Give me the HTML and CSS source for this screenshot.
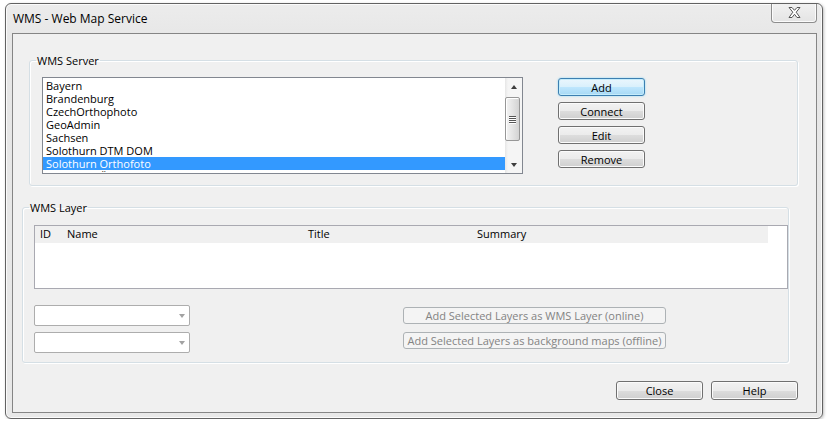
FILE: index.html
```html
<!DOCTYPE html>
<html lang="en">
<head>
  <meta charset="UTF-8">
  <title>WMS - Web Map Service</title>
  <link rel="stylesheet" href="styles.css">
</head>
<body>
  <div class="window">
    <div class="titlebar">
      <span class="title">WMS - Web Map Service</span>
      <button class="close-x" title="Close">
        <svg width="13" height="11" viewBox="0 0 13 11">
          <polygon points="1,0.5 4,0.5 6.5,3.3 9,0.5 12,0.5 8.2,5.2 12,10.5 9,10.5 6.5,7.3 4,10.5 1,10.5 4.8,5.2" fill="#fff" stroke="#555" stroke-width="1" stroke-linejoin="round"/>
        </svg>
      </button>
    </div>

    <div class="client">
      <fieldset class="group server-group">
        <legend>WMS Server</legend>
        <div class="server-row">
          <div class="listbox">
            <ul class="server-list">
              <li>Bayern</li>
              <li>Brandenburg</li>
              <li>CzechOrthophoto</li>
              <li>GeoAdmin</li>
              <li>Sachsen</li>
              <li>Solothurn DTM DOM</li>
              <li class="selected">Solothurn Orthofoto</li>
              <li>Solothurn ÖREB</li>
            </ul>
            <div class="vscroll">
              <div class="sb-arrow"><span class="tri-up"></span></div>
              <div class="sb-track">
                <div class="sb-thumb">
                  <span></span><span></span><span></span><span></span>
                </div>
              </div>
              <div class="sb-arrow"><span class="tri-down"></span></div>
            </div>
          </div>
          <div class="server-buttons">
            <button class="btn btn-default">Add</button>
            <button class="btn">Connect</button>
            <button class="btn">Edit</button>
            <button class="btn">Remove</button>
          </div>
        </div>
      </fieldset>

      <fieldset class="group layer-group">
        <legend>WMS Layer</legend>
        <div class="layer-table">
          <div class="layer-head">
            <span class="col col-id">ID</span>
            <span class="col col-name">Name</span>
            <span class="col col-title">Title</span>
            <span class="col col-summary">Summary</span>
          </div>
        </div>
        <div class="layer-actions">
          <div class="combos">
            <div class="combo"><span class="combo-arrow"></span></div>
            <div class="combo"><span class="combo-arrow"></span></div>
          </div>
          <div class="add-buttons">
            <button class="btn btn-wide btn-online" disabled>Add Selected Layers as WMS Layer (online)</button>
            <button class="btn btn-wide" disabled>Add Selected Layers as background maps (offline)</button>
          </div>
        </div>
      </fieldset>

      <div class="dialog-buttons">
        <button class="btn btn-dialog">Close</button>
        <button class="btn btn-dialog">Help</button>
      </div>
    </div>
  </div>
</body>
</html>
```

FILE: styles.css
```css
body {
  margin: 0;
  background: #fff;
  font-family: "Open Sans", "Noto Sans", sans-serif;
  font-size: 11px;
  color: #000;
}

/* window frame */
.window {
  margin: 3px 0 0 5px;
  width: 818px; height: 416px; box-sizing: border-box;
  border: 1px solid #626262; border-radius: 6px;
  background: linear-gradient(#ececec, #e6e6e6 40px, #e8e8e8);
  box-shadow: inset 0 0 0 1px #fbfbfb, 1px 1px 3px rgba(0,0,0,0.25);
  padding: 0 5px 5px 6px;
  display: flex; flex-direction: column;
}
.titlebar {
  height: 29px; flex: none;
  display: flex; justify-content: space-between; align-items: flex-start;
}
.title {
  font-size: 12px; line-height: 16px;
  padding: 7px 0 0 1px;
}
.close-x {
  width: 46px; height: 19px; margin-right: 0; padding: 0;
  border: 1px solid #8d8d8d; border-top: none;
  border-radius: 0 0 4px 4px;
  background: linear-gradient(#f1f1f1, #e4e4e4);
  box-shadow: inset 0 -1px 0 #fbfbfb, inset 1px 0 0 #fbfbfb, inset -1px 0 0 #fbfbfb;
  display: flex; align-items: center; justify-content: center;
}
.close-x svg { display: block; margin-top: -2px; }

.client {
  flex: 1;
  border: 1px solid #858585;
  background: #f0f0f0;
  display: flex; flex-direction: column;
}

/* group boxes; the legend sits 6px in from the border */
.group {
  margin: 0; padding: 0; min-inline-size: 0;
  border: 1px solid #d5dfe5; border-radius: 3px;
  box-shadow: inset 1px 1px 0 #fff, 1px 1px 0 #fff;
}
.group legend {
  padding: 0 1px;
  line-height: 13px;
}
.server-group {
  width: 769px; box-sizing: border-box;
  margin: 20px 0 0 16px;
  padding: 10px 0 11px 12px;
}
.server-group legend { margin-left: -6px; }
.layer-group {
  width: 767px; box-sizing: border-box;
  margin: 15px 0 0 9px;
  padding: 11px 0 9px 11px;
}
.layer-group legend { margin-left: -5px; }

/* server list */
.server-row { display: flex; align-items: flex-start; }
.listbox {
  width: 481px; height: 97px; box-sizing: border-box;
  border: 1px solid #828790; background: #fff;
  display: flex; overflow: hidden;
}
.server-list {
  flex: 1; margin: 0; padding: 1px 0 0; list-style: none;
  overflow: hidden;
}
.server-list li {
  height: 13px; line-height: 13px;
  padding-left: 3px; white-space: nowrap;
}
.server-list li.selected { background: #3399ff; color: #fff; }

.vscroll {
  width: 17px; flex: none;
  background: linear-gradient(to right, #e6e6e6, #f5f5f5 3px, #f5f5f5);
  display: flex; flex-direction: column;
}
.sb-arrow {
  height: 17px; flex: none;
  display: flex; align-items: center; justify-content: center;
}
.tri-up, .tri-down {
  width: 0; height: 0;
  border-left: 3.5px solid transparent; border-right: 3.5px solid transparent;
}
.tri-up   { border-bottom: 4px solid #3e3e3e; }
.tri-down { border-top: 4px solid #3e3e3e; }
.sb-track { flex: 1; padding-top: 2px; }
.sb-thumb {
  width: 15px; height: 44px; box-sizing: border-box;
  border: 1px solid #979797; border-radius: 2px;
  background: linear-gradient(to right, #f4f4f4, #e4e4e4 50%, #d3d3d3);
  box-shadow: inset 1px 1px 0 #fff;
  display: flex; flex-direction: column; align-items: center; justify-content: center; gap: 1px;
}
.sb-thumb span {
  width: 7px; height: 1px; background: #555;
  box-shadow: 0 1px 0 #fff;
}

.server-buttons {
  margin-left: 35px; padding-top: 1px;
  display: flex; flex-direction: column; gap: 6px;
}

/* buttons */
.btn {
  font: inherit; color: #000;
  height: 18px; padding: 0; box-sizing: border-box;
  border: 1px solid #707070; border-radius: 3px;
  background: linear-gradient(#f2f2f2, #ebebeb 50%, #dddddd 51%, #cfcfcf);
  box-shadow: inset 0 0 0 1px #fbfbfb;
  line-height: 15px; text-align: center;
}
.server-buttons .btn { width: 87px; }
.btn-default {
  border-color: #3c7fb1;
  background: linear-gradient(#eaf6fd, #d9f0fc 50%, #bee6fd 51%, #a7d9f5);
  box-shadow: inset 0 0 0 1px #c5ecfb, 0 0 2px #7fd3f7;
}
.btn[disabled] {
  color: #838383;
  border-color: #adb2b5;
  background: #f4f4f4;
  box-shadow: none;
}
.btn-wide { width: 263px; height: 17px; line-height: 14px; }

/* layer table */
.layer-table {
  width: 754px; height: 64px; box-sizing: border-box;
  border: 1px solid #a9a9b1; background: #fff;
}
.layer-head {
  width: 733px; height: 17px;
  background: #f0f0f0;
  display: flex; line-height: 15px;
}
.col { padding-left: 5px; box-sizing: border-box; white-space: nowrap; }
.col-id { width: 27px; }
.col-name { width: 241px; }
.col-title { width: 169px; }
.col-summary { flex: 1; }

.layer-actions { display: flex; margin-top: 16px; }
.combos { display: flex; flex-direction: column; gap: 6px; }
.combo {
  width: 156px; height: 21px; box-sizing: border-box;
  border: 1px solid #adadad; border-radius: 2px; background: #fff;
  display: flex; align-items: center; justify-content: flex-end;
  padding-right: 4px;
}
.combo-arrow {
  width: 0; height: 0;
  border-left: 3.5px solid transparent; border-right: 3.5px solid transparent;
  border-top: 4px solid #a2a2a2;
}
.add-buttons {
  margin-left: 213px; padding-top: 2px;
  display: flex; flex-direction: column; gap: 8px;
}

.dialog-buttons {
  display: flex; justify-content: flex-end; gap: 8px;
  margin: 18px 18px 0 0;
}
.btn-dialog { width: 87px; height: 19px; line-height: 16px; }
```
